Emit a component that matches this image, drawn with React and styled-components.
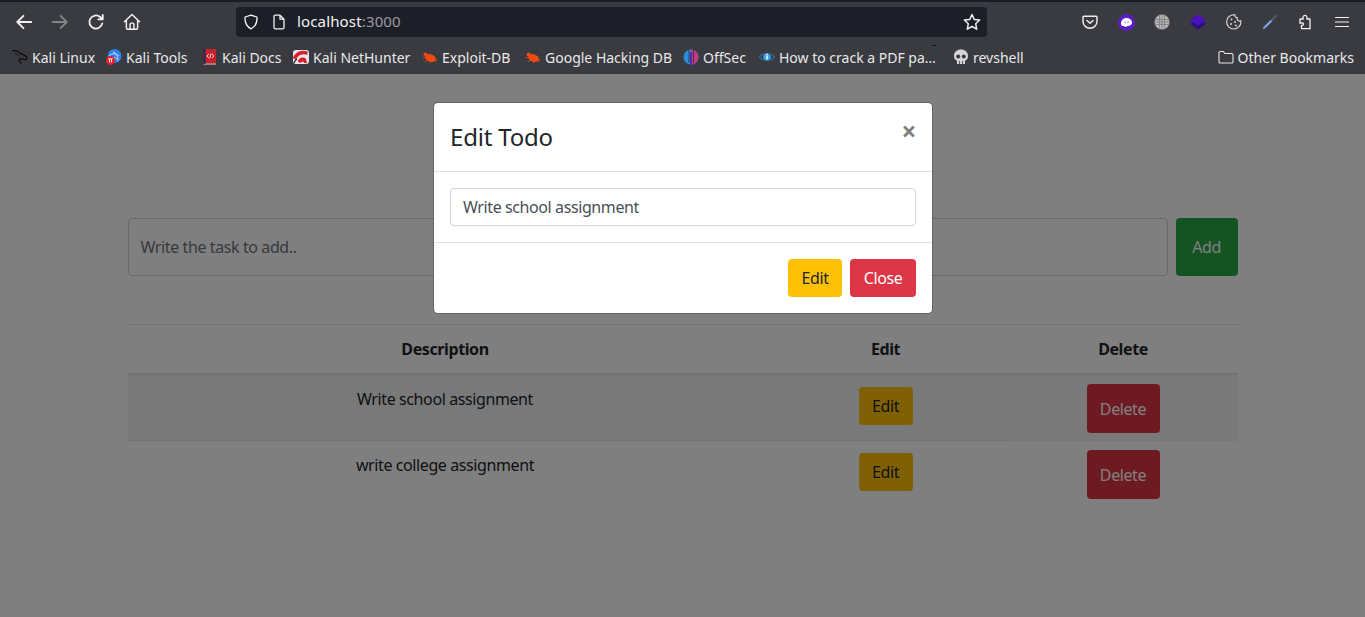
import React from 'react'
import styled, { createGlobalStyle } from 'styled-components'

const GlobalStyle = createGlobalStyle`
  html, body {
    margin: 0;
    padding: 0;
    height: 100%;
    overflow: hidden;
  }
  body {
    font-family: "Noto Sans", "Liberation Sans", sans-serif;
    font-size: 16px;
    line-height: 1.5;
    color: #212529;
  }
  * { box-sizing: border-box; }
`

const Browser = styled.div`
  display: flex;
  flex-direction: column;
  height: 100vh;
`

const Toolbar = styled.div`
  display: flex;
  align-items: center;
  height: 42px;
  padding-left: 6px;
  padding-right: 5px;
  background: #3a3b40;
  border-top: 2px solid #1b1c22;
`

const NavGroup = styled.div`
  display: flex;
  align-items: center;
  width: 230px;
`

const ToolButton = styled.div`
  display: flex;
  align-items: center;
  justify-content: center;
  width: 36px;
  height: 30px;
  flex: none;
`

const PageInfo = styled(ToolButton)`
  margin-left: 2px;
`

const UrlBar = styled.div`
  display: flex;
  align-items: center;
  width: 751px;
  height: 30px;
  padding: 0 6px 0 7px;
  background: #1c1f27;
  border-radius: 4px;
  color: #f3f3f4;
  font-size: 15px;
  letter-spacing: 0.15px;
`

const UrlText = styled.span`
  flex: 1;
  position: relative;
  top: -1px;
  span { color: #9b9ca0; }
`

const Extensions = styled.div`
  display: flex;
  align-items: center;
  margin-left: auto;
`

const Bookmarks = styled.div`
  position: relative;
  display: flex;
  align-items: center;
  height: 32px;
  padding: 0 11px 2px 12px;
  background: #3a3b40;
  color: #e8e8ea;
  font-size: 14px;

  &::after {
    content: '';
    position: absolute;
    top: 3px;
    left: 932px;
    width: 4px;
    height: 1px;
    background: #141417;
  }
`

const Bookmark = styled.div`
  display: flex;
  align-items: center;
  gap: 4px;
  flex: none;
  width: ${p => p.$w ? `${p.$w}px` : 'auto'};
  white-space: nowrap;
`

const OtherBookmarks = styled(Bookmark)`
  margin-left: auto;
`

const Page = styled.main`
  position: relative;
  flex: 1;
  background: #fff;
  overflow: hidden;
  letter-spacing: -0.4px;
`

const Container = styled.div`
  width: 1110px;
  margin: 0 auto;
  padding-top: 144px;
`

const AddForm = styled.div`
  display: flex;
  gap: 8px;
  margin-bottom: 48px;
`

const TaskInput = styled.div`
  flex: 1;
  height: 58px;
  display: flex;
  align-items: center;
  padding: 0 12px;
  border: 1px solid #ced4da;
  border-radius: 4px;
  color: #6c757d;
`

const Button = styled.button`
  display: block;
  border: 0;
  border-radius: 4px;
  font: inherit;
  letter-spacing: inherit;
  padding: 0;
  width: ${p => p.$w}px;
  height: ${p => p.$h || 38}px;
  color: ${p => p.$dark ? '#212529' : '#fff'};
  background: ${p => p.$bg};
`

const Table = styled.table`
  width: 100%;
  border-collapse: separate;
  border-spacing: 0;
  table-layout: fixed;
  text-align: center;
  border-top: 1px solid #dee2e6;
`

const Th = styled.th`
  height: 50px;
  padding: 12px;
  font-weight: 700;
  border-bottom: 2px solid #dee2e6;
  width: ${p => p.$w}px;
`

const Row = styled.tr`
  background: ${p => p.$striped ? '#f2f2f2' : 'transparent'};
`

const Td = styled.td`
  padding: ${p => p.$tight ? '9px 0 8px' : '12px 0'};
  height: 66px;
  vertical-align: top;
  border-bottom: ${p => p.$line ? '1px solid #dee2e6' : '0'};

  button { margin: 0 auto; }
`

const Backdrop = styled.div`
  position: absolute;
  inset: 0;
  background: rgba(0, 0, 0, 0.5);
`

const Modal = styled.div`
  position: absolute;
  top: 28px;
  left: 433px;
  width: 500px;
  background: #fff;
  border: 1px solid rgba(0, 0, 0, 0.2);
  border-radius: 5px;
  background-clip: padding-box;
`

const ModalHeader = styled.div`
  display: flex;
  justify-content: space-between;
  align-items: flex-start;
  height: 69px;
  padding: 16px;
  border-bottom: 1px solid #dee2e6;
`

const ModalTitle = styled.h5`
  margin: 0;
  font-size: 24px;
  font-weight: 400;
  line-height: 36px;
  letter-spacing: -0.2px;
`

const CloseX = styled.span`
  font-size: 26px;
  font-weight: 700;
  line-height: 24px;
  color: #000;
  opacity: 0.5;
`

const ModalBody = styled.div`
  height: 70px;
  padding: 16px;
`

const EditInput = styled.div`
  display: flex;
  align-items: center;
  height: 38px;
  padding: 0 12px;
  border: 1px solid #ced4da;
  border-radius: 4px;
  color: #495057;
`

const ModalFooter = styled.div`
  display: flex;
  justify-content: flex-end;
  gap: 8px;
  height: 71px;
  padding: 16px;
  border-top: 1px solid #dee2e6;
`

const Stroke = ({ children, c = '#f2f2f3', s = 1.6, size = 18 }) => (
  <svg width={size} height={size} viewBox="0 0 16 16" fill="none" stroke={c} strokeWidth={s} strokeLinecap="round" strokeLinejoin="round">{children}</svg>
)

const Back = ({ c }) => <Stroke c={c}><path d="M14.5 8H2M7.5 2.5L2 8l5.5 5.5" /></Stroke>
const Forward = ({ c }) => <Stroke c={c}><path d="M1.5 8H14M8.5 2.5L14 8l-5.5 5.5" /></Stroke>
const Reload = () => <Stroke><path d="M13.6 9.2A5.8 5.8 0 1 1 11.7 3.6L14 5.6M14 1.6v4h-4" /></Stroke>
const Home = () => <Stroke s={1.3}><path d="M1.2 7.8L8 1.4l6.8 6.4M3 6.4v7a1 1 0 0 0 1 1h8a1 1 0 0 0 1-1v-7M6.3 14.4V10a1 1 0 0 1 1-1h1.4a1 1 0 0 1 1 1v4.4" /></Stroke>
const Shield = () => <Stroke s={1.3} size={16}><path d="M8 1.2L14 3c.3 5.5-1.6 9.6-6 11.8C3.600 12.600 1.700 8.500 2 3z" /></Stroke>
const Doc = () => <Stroke s={1.3} size={16}><path d="M3 2.500a1.300 1.300 0 0 1 1.300-1.300H9L13 5.200v8.300a1.300 1.300 0 0 1-1.300 1.300H4.300A1.300 1.300 0 0 1 3 13.500zM9 1.200v4h4" /></Stroke>
const Star = () => <Stroke s={1.3}><path d="M8 1.300l2 4.400 4.800.6-3.500 3.300.9 4.800L8 12l-4.200 2.400.9-4.800L1.200 6.300 6 5.700z" /></Stroke>

const Pocket = () => (
  <Stroke s={1.4} size={16}>
    <path d="M1.800 2.200h12.400a.8.8 0 0 1 .8.8v4.500a7 6.800 0 0 1-14 0V3a.8.8 0 0 1 .8-.8z" />
    <path d="M5 6.400L8 9.200l3-2.800" />
  </Stroke>
)

const Ghost = () => (
  <svg width="17" height="17" viewBox="0 0 16 16">
    <circle cx="8" cy="8" r="8" fill="#5a1fc0" />
    <path d="M2.800 9.500c0-3.500 2.200-5.800 5-5.800 2.900 0 5.400 1.900 5.400 4.400 0 2-2 3.200-4 3.200-.9 0-1.300.8-2.300.8-.8 0-1.100-.7-1.900-.7-1.200 0-2.200-.7-2.200-1.900z" fill="#fff" />
    <circle cx="6.600" cy="7.600" r=".6" fill="#5a1fc0" />
    <circle cx="9.400" cy="7.600" r=".6" fill="#5a1fc0" />
  </svg>
)

const Globe = () => (
  <svg width="16" height="16" viewBox="0 0 16 16" fill="none">
    <circle cx="8" cy="8" r="7.500" fill="#b5b5b5" />
    <path d="M.5 5.500h15M.5 8h15M.5 10.500h15M5.500.5v15M8 .5v15M10.500.5v15" stroke="#7d7d7f" strokeWidth=".8" />
  </svg>
)

const Layers = () => (
  <svg width="16" height="16" viewBox="0 0 16 16">
    <path d="M8 5l8 5-8 5.500L0 10z" fill="#2c0f86" />
    <path d="M8 .5l8 5.500-8 5.500L0 6z" fill="#4a12bb" />
  </svg>
)

const Cookie = () => (
  <svg width="16" height="16" viewBox="0 0 16 16" fill="none">
    <path d="M9 .9a2.500 2.500 0 0 0 2.300 3 2.500 2.500 0 0 0 3.500 3A7.100 7.100 0 1 1 9 .9z" stroke="#d4d4d6" strokeWidth="1.200" />
    <circle cx="5.500" cy="5.500" r="1" fill="#d4d4d6" />
    <circle cx="5" cy="10" r="1" fill="#d4d4d6" />
    <circle cx="9" cy="8" r="1" fill="#d4d4d6" />
    <circle cx="10" cy="11.500" r="1" fill="#d4d4d6" />
  </svg>
)

const Dropper = () => (
  <svg width="16" height="16" viewBox="0 0 16 16" fill="none" strokeLinecap="round">
    <path d="M2 14L10 6" stroke="#5f8ee0" strokeWidth="2.400" />
    <path d="M10 6l4-4" stroke="#55565b" strokeWidth="2.400" />
    <path d="M3 13l6-6" stroke="#b9d0f5" strokeWidth=".7" />
  </svg>
)

const Puzzle = () => (
  <Stroke s={1.3} size={16}>
    <path d="M2 5h3.200C4.600 3.600 5 1.300 7 1.300S9.400 3.600 8.800 5H12v9.700H3.500v-3.400c1 .3 2-.1 2-1.300S4 8.500 2 9.300z" />
  </Stroke>
)

const Menu = () => <Stroke s={1.2} size={16}><path d="M1.500 3.500h13M1.500 8h13M1.500 12.500h13" /></Stroke>

const Icon16 = ({ children }) => <svg width="16" height="16" viewBox="0 0 16 16" fill="none">{children}</svg>

const KaliDragon = () => (
  <Icon16>
    <path d="M0 2c3-1 6 0 8 2 2 1.500 5 1.500 6.500 4 .8 1.600-.5 3.500-2.500 2.500-1.500-.7-3-1.500-4.500-.5-1 .8-.2 2.500 1.500 4" stroke="#0b0b0d" strokeWidth="1.300" strokeLinecap="round" />
    <path d="M3 4.500c2 .5 3.500 1.500 5 3" stroke="#0b0b0d" strokeWidth=".8" />
  </Icon16>
)

const KaliTools = () => (
  <Icon16>
    <circle cx="8.500" cy="7" r="7" fill="#2f7fe8" />
    <path d="M3 7c3-3 7-3 10 0M7 3c3 1 5 4 5 9M5 10c2-2 4-2 6 0" stroke="#cfe3fb" strokeWidth=".9" />
    <circle cx="4.500" cy="11.500" r="4.500" fill="#e3222c" />
    <path d="M2.500 9.800h4M3.500 10v3.400M5.500 10v3.400" stroke="#fff" strokeWidth=".9" />
  </Icon16>
)

const KaliDocs = () => (
  <Icon16>
    <rect x="1.500" y="0" width="12.500" height="16" fill="#c8222a" rx="1" />
    <rect x="1.500" y="14" width="12.500" height="2" fill="#a77" />
    <rect x="1.500" y="0" width="2" height="15" fill="#1e2a55" />
    <path d="M6.800 5L5 7l1.800 2M10 5l1.800 2L10 9M9 4.500L7.800 9.500" stroke="#fff" strokeWidth=".8" />
  </Icon16>
)

const NetHunter = () => (
  <Icon16>
    <rect x="0" y="1" width="16" height="14" rx="3" fill="#e8e8ea" />
    <path d="M0 9C2 3 9 0 15 3l-1 3C9 4 5 6 3 11z" fill="#d8202e" />
    <path d="M5 13c0-4 5-6 8-3l1 4h-3c-.5-2-2-2-3 0z" fill="#d8202e" />
    <path d="M1 14c.5-2 1.500-3 3-4" stroke="#222" strokeWidth="1.200" />
  </Icon16>
)

const Bug = () => (
  <Icon16>
    <ellipse cx="8.500" cy="9" rx="5.500" ry="3.800" fill="#f04a10" transform="rotate(18 8.500 9)" />
    <circle cx="3.500" cy="5.500" r="2" fill="#f04a10" />
    <path d="M1 9l3-1M3 13l3-3M8 14l1-2M14 13l-2-2M15.500 11H13" stroke="#f04a10" strokeWidth=".9" />
  </Icon16>
)

const OffSec = () => (
  <Icon16>
    <circle cx="8" cy="8" r="7.500" fill="#2b8fd8" />
    <path d="M8 .5a7.500 7.500 0 0 1 7.500 7.500A7.500 7.500 0 0 1 8 15.500z" fill="#c33a7c" />
    <path d="M6 1v13M10.500 1v13" stroke="#3a3b40" strokeWidth="1" />
    <path d="M8 3v13" stroke="#5a22c8" strokeWidth="2" />
  </Icon16>
)

const EyeInfo = () => (
  <Icon16>
    <path d="M.5 8L4 4.500M.5 8L4 11.500M15.500 8L12 4.500M15.500 8L12 11.500" stroke="#2f8fd0" strokeWidth="1" />
    <circle cx="8" cy="8" r="3.800" fill="#36a3ee" />
    <rect x="7.300" y="6.500" width="1.400" height="4" fill="#fff" />
    <rect x="7.300" y="4.800" width="1.400" height="1.200" fill="#fff" />
  </Icon16>
)

const Skull = () => (
  <Icon16>
    <path d="M8 .5c4 0 7 2.500 7 6.500 0 2.500-1 4-3 4.800V15H4v-3.200C2 11 1 9.500 1 7 1 3 4 .5 8 .5z" fill="#d5d5d7" />
    <circle cx="5.200" cy="7.500" r="2" fill="#3a3b40" />
    <circle cx="10.800" cy="7.500" r="2" fill="#3a3b40" />
    <path d="M6.500 12v3M9.500 12v3" stroke="#3a3b40" strokeWidth=".8" />
  </Icon16>
)

const Folder = () => (
  <Icon16>
    <path d="M1 3.800a1.300 1.300 0 0 1 1.300-1.300h3l1.600 2h6.800A1.300 1.300 0 0 1 15 5.800v6.900a1.300 1.300 0 0 1-1.300 1.300H2.300A1.300 1.300 0 0 1 1 12.700z" stroke="#e8e8ea" strokeWidth="1.100" />
  </Icon16>
)

const bookmarks = [
  { title: 'Kali Linux', Icon: KaliDragon, width: 94 },
  { title: 'Kali Tools', Icon: KaliTools, width: 96 },
  { title: 'Kali Docs', Icon: KaliDocs, width: 91 },
  { title: 'Kali NetHunter', Icon: NetHunter, width: 129 },
  { title: 'Exploit-DB', Icon: Bug, width: 103 },
  { title: 'Google Hacking DB', Icon: Bug, width: 158 },
  { title: 'OffSec', Icon: OffSec, width: 76 },
  { title: 'How to crack a PDF pa…', Icon: EyeInfo, width: 194 },
  { title: 'revshell', Icon: Skull },
]

const todos = ['Write school assignment', 'write college assignment']

const App = () => (
  <Browser>
    <GlobalStyle />
    <Toolbar>
      <NavGroup>
        <ToolButton><Back /></ToolButton>
        <ToolButton><Forward c="#85868a" /></ToolButton>
        <ToolButton><Reload /></ToolButton>
        <ToolButton><Home /></ToolButton>
      </NavGroup>
      <UrlBar>
        <Shield />
        <PageInfo><Doc /></PageInfo>
        <UrlText>localhost<span>:3000</span></UrlText>
        <Star />
      </UrlBar>
      <Extensions>
        <ToolButton><Pocket /></ToolButton>
        <ToolButton><Ghost /></ToolButton>
        <ToolButton><Globe /></ToolButton>
        <ToolButton><Layers /></ToolButton>
        <ToolButton><Cookie /></ToolButton>
        <ToolButton><Dropper /></ToolButton>
        <ToolButton><Puzzle /></ToolButton>
        <ToolButton><Menu /></ToolButton>
      </Extensions>
    </Toolbar>
    <Bookmarks>
      {bookmarks.map(({ title, Icon, width }) => (
        <Bookmark key={title} $w={width}><Icon />{title}</Bookmark>
      ))}
      <OtherBookmarks><Folder />Other Bookmarks</OtherBookmarks>
    </Bookmarks>
    <Page>
      <Container>
        <AddForm>
          <TaskInput>Write the task to add..</TaskInput>
          <Button $w={62} $h={58} $bg="#28a745">Add</Button>
        </AddForm>
        <Table>
          <thead>
            <tr>
              <Th $w={635}>Description</Th>
              <Th $w={246}>Edit</Th>
              <Th>Delete</Th>
            </tr>
          </thead>
          <tbody>
            {todos.map((todo, i) => (
              <Row key={todo} $striped={i === 0}>
                <Td $line={i === 0}>{todo}</Td>
                <Td $line={i === 0}><Button $w={54} $bg="#ffc107" $dark>Edit</Button></Td>
                <Td $tight><Button $w={73} $h={49} $bg="#dc3545">Delete</Button></Td>
              </Row>
            ))}
          </tbody>
        </Table>
      </Container>
      <Backdrop />
      <Modal>
        <ModalHeader>
          <ModalTitle>Edit Todo</ModalTitle>
          <CloseX>×</CloseX>
        </ModalHeader>
        <ModalBody>
          <EditInput>Write school assignment</EditInput>
        </ModalBody>
        <ModalFooter>
          <Button $w={54} $bg="#ffc107" $dark>Edit</Button>
          <Button $w={66} $bg="#dc3545">Close</Button>
        </ModalFooter>
      </Modal>
    </Page>
  </Browser>
)

export default App
